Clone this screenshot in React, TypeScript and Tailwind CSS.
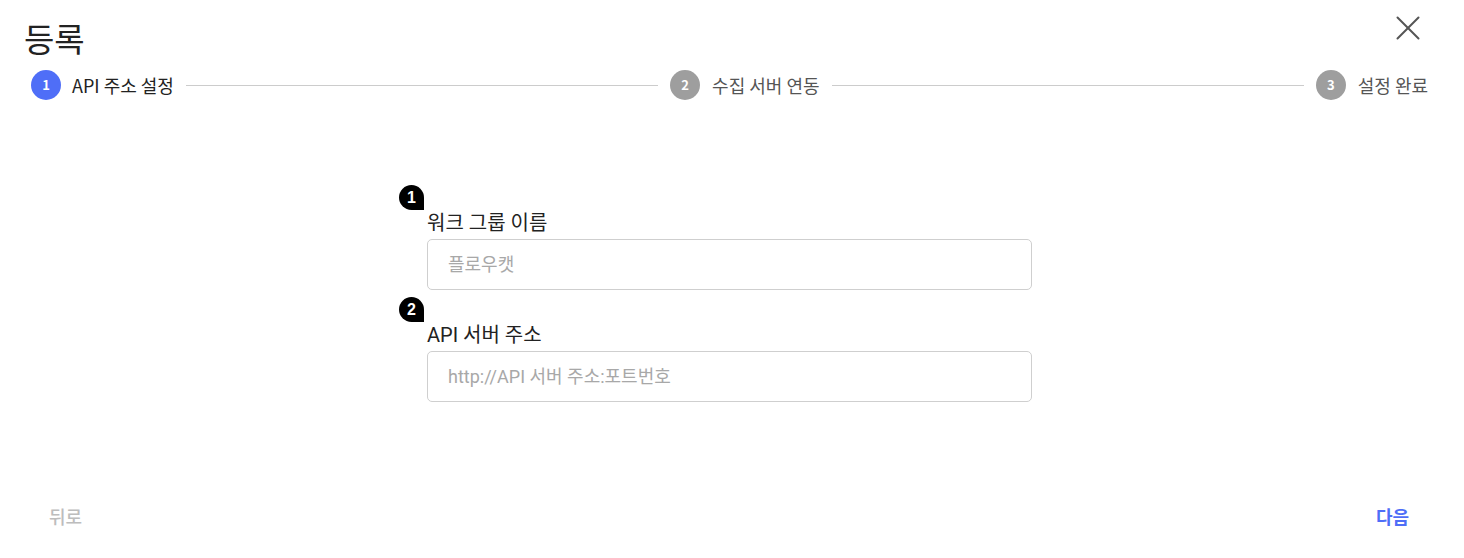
import { X } from "lucide-react";

const font = { fontFamily: '"Noto Sans CJK KR", "Noto Sans", sans-serif' };
const fieldFont = { fontFamily: 'Roboto, "Noto Sans CJK KR", sans-serif' };

function Step({ n, label, active }: { n: number; label: string; active?: boolean }) {
  return (
    <div className="flex items-center shrink-0">
      <div
        className={
          active
            ? "w-[30px] h-[30px] rounded-full bg-[#4f6ef7] text-white text-[13px] font-bold flex items-center justify-center"
            : "w-[30px] h-[30px] rounded-full bg-[#9e9e9e] text-white text-[13px] font-bold flex items-center justify-center"
        }
      >
        {n}
      </div>
      <span
        className={
          active ? "ml-[11px] text-[18px] text-[#222]" : "ml-[12px] text-[18px] text-[#555]"
        }
      >
        {label}
      </span>
    </div>
  );
}

function Field({ n, label, placeholder }: { n: number; label: string; placeholder: string }) {
  return (
    <div className="flex flex-col">
      <div
        className="-ml-[28px] w-[25px] h-[25px] rounded-full rounded-br-none bg-black text-white text-[16px] font-bold flex items-center justify-center"
        style={{ fontFamily: '"Liberation Sans", Arial, sans-serif' }}
      >
        {n}
      </div>
      <div className="text-[20px] leading-[27px] text-[#222]" style={fieldFont}>
        {label}
      </div>
      <input
        placeholder={placeholder}
        className="mt-[2px] w-[605px] h-[51px] rounded-[5px] border border-[#cfcfcf] px-[20px] text-[18px] text-[#222] placeholder:text-[#a8a8a8] outline-none"
        style={fieldFont}
      />
    </div>
  );
}

export default function App() {
  return (
    <div className="w-full h-[558px] bg-white flex flex-col" style={font}>
      <div className="flex items-start justify-between pl-[24px] pr-[35px] pt-[16px]">
        <h1 className="text-[33px] leading-[44px] text-[#222] font-normal">등록</h1>
        <button className="mt-[-9px] text-[#555]">
          <X size={42} strokeWidth={1.15} />
        </button>
      </div>

      <div className="flex items-center pl-[31px] pr-[36px] mt-[10px]">
        <Step n={1} label="API 주소 설정" active />
        <div className="flex-1 h-px bg-[#cccccc] mx-[12px]" />
        <Step n={2} label="수집 서버 연동" />
        <div className="flex-1 h-px bg-[#cccccc] mx-[12px]" />
        <Step n={3} label="설정 완료" />
      </div>

      <div className="pl-[427px] mt-[85px] flex flex-col gap-[7px]">
        <Field n={1} label="워크 그룹 이름" placeholder="플로우캣" />
        <Field n={2} label="API 서버 주소" placeholder="http://API 서버 주소:포트번호" />
      </div>

      <div className="mt-auto flex items-center justify-between pl-[49px] pr-[55px] pb-[28px]">
        <button className="text-[18px] font-medium text-[#bdbdbd]">뒤로</button>
        <button className="text-[18px] font-bold text-[#4f6ef7]">다음</button>
      </div>
    </div>
  );
}
